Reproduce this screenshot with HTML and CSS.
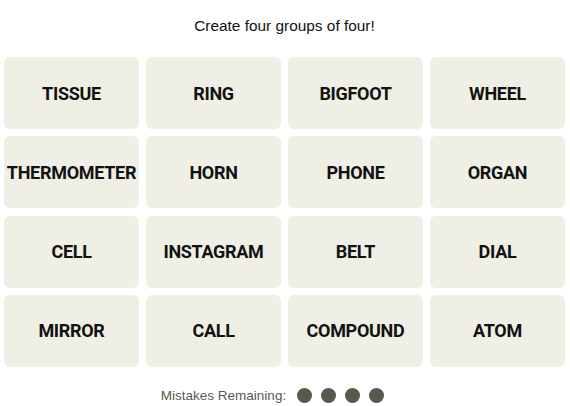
FILE: index.html
```html
<!DOCTYPE html>
<html>
<head>
<meta charset="utf-8">
<link rel="stylesheet" href="styles.css">
</head>
<body>
<div class="game">
  <p class="title">Create four groups of four!</p>
  <div class="board">
    <div class="tile">TISSUE</div>
    <div class="tile">RING</div>
    <div class="tile">BIGFOOT</div>
    <div class="tile">WHEEL</div>
    <div class="tile">THERMOMETER</div>
    <div class="tile">HORN</div>
    <div class="tile">PHONE</div>
    <div class="tile">ORGAN</div>
    <div class="tile">CELL</div>
    <div class="tile">INSTAGRAM</div>
    <div class="tile">BELT</div>
    <div class="tile">DIAL</div>
    <div class="tile">MIRROR</div>
    <div class="tile">CALL</div>
    <div class="tile">COMPOUND</div>
    <div class="tile">ATOM</div>
  </div>
  <div class="mistakes">
    <span class="mistakes-label">Mistakes Remaining:</span>
    <span class="dots">
      <span class="dot"></span><span class="dot"></span><span class="dot"></span><span class="dot"></span>
    </span>
  </div>
</div>
</body>
</html>
```
FILE: styles.css
```css
html, body {
  margin: 0;
  padding: 0;
  background: #ffffff;
}
.game {
  padding: 0 5px 0 4px;
  font-family: "Liberation Sans", Arial, sans-serif;
  color: #121212;
}
.title {
  margin: 0;
  padding-top: 17px;
  height: 57px;
  box-sizing: border-box;
  text-align: center;
  font-size: 15.4px;
  line-height: 18px;
}
.board {
  display: grid;
  grid-template-columns: repeat(4, 135px);
  grid-auto-rows: 72px;
  column-gap: 7px;
  row-gap: 7.33px;
}
.tile {
  background: #efefe6;
  border-radius: 6px;
  display: flex;
  align-items: center;
  justify-content: center;
  font-family: Roboto, "Liberation Sans", sans-serif;
  font-weight: 700;
  font-size: 18px;
  letter-spacing: -0.3px;
  text-transform: uppercase;
  white-space: nowrap;
}
.mistakes {
  display: flex;
  align-items: center;
  justify-content: center;
  gap: 11px;
  margin-top: 20px;
  padding-right: 24px;
  height: 17px;
}
.mistakes-label {
  font-size: 13.5px;
  color: #5a594e;
}
.dots {
  display: flex;
  gap: 9px;
}
.dot {
  width: 15px;
  height: 15px;
  border-radius: 50%;
  background: #5a594e;
}
```
